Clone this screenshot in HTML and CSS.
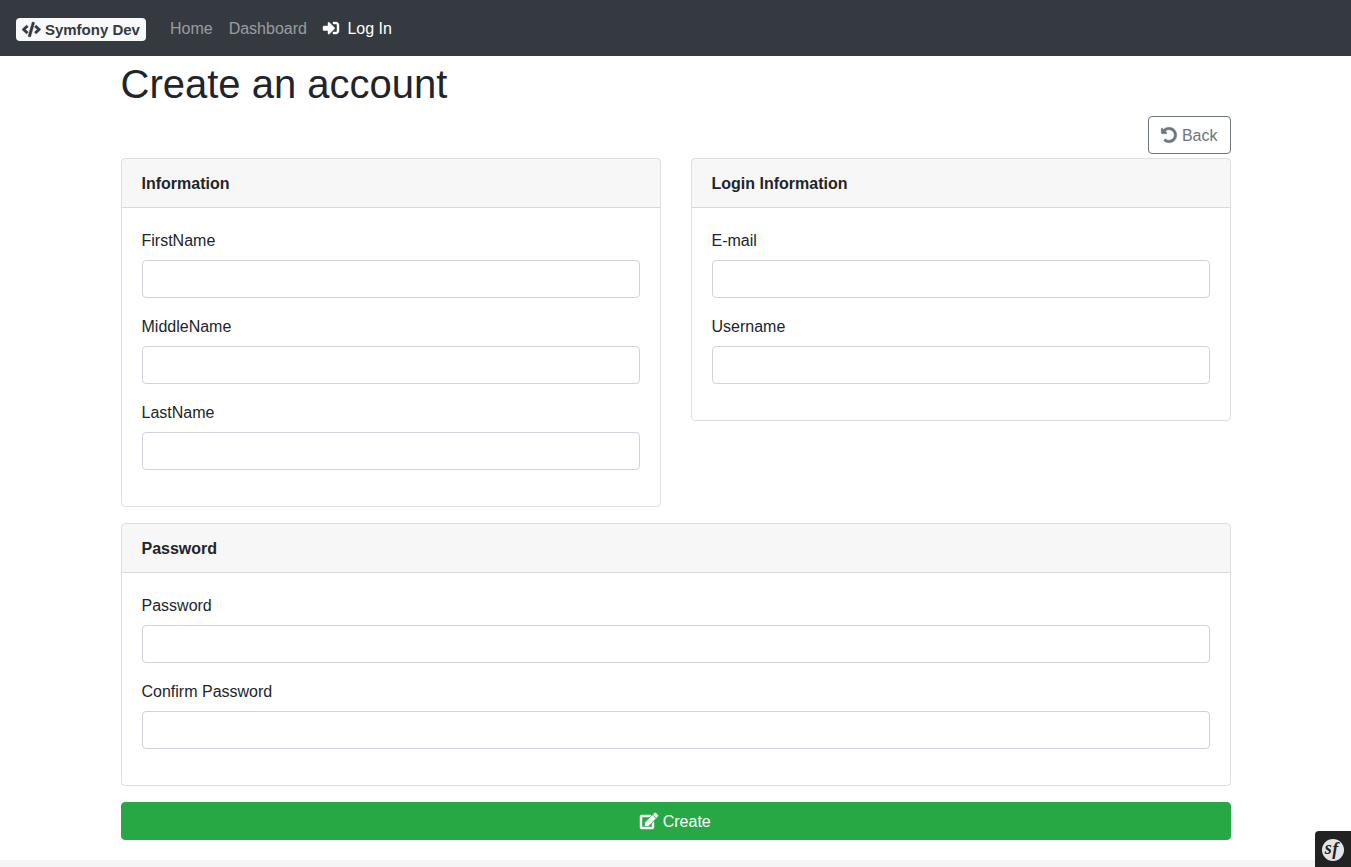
FILE: index.html
```html
<!DOCTYPE html>
<html lang="en">
<head>
<meta charset="utf-8">
<title>Create an account</title>
<link rel="stylesheet" href="styles.css">
</head>
<body>
<nav class="navbar">
  <a class="brand" href="#"><span class="badge"><svg class="icon icon-code" viewBox="0 0 640 512"><path d="M278.9 511.5l-61-17.7c-6.4-1.8-10-8.5-8.2-14.9L346.2 8.7c1.8-6.4 8.5-10 14.9-8.2l61 17.7c6.4 1.8 10 8.5 8.2 14.9L293.8 503.3c-1.9 6.4-8.5 10.1-14.9 8.2zm-114-112.2l43.5-46.4c4.6-4.9 4.3-12.7-.8-17.2L117 256l90.6-79.7c5.1-4.5 5.5-12.3.8-17.2l-43.5-46.4c-4.5-4.8-12.1-5.1-17-.5L3.8 247.2c-5.1 4.7-5.1 12.8 0 17.5l144.1 135.1c4.9 4.6 12.5 4.4 17-.5zm327.2.6l144.1-135.1c5.1-4.7 5.1-12.8 0-17.5L492.1 112.1c-4.8-4.5-12.4-4.3-17 .5L431.6 159c-4.6 4.9-4.3 12.7.8 17.2L523 256l-90.6 79.7c-5.1 4.5-5.5 12.3-.8 17.2l43.5 46.4c4.5 4.9 12.1 5.1 17 .6z"/></svg> Symfony Dev</span></a>
  <a class="nav-link" href="#">Home</a>
  <a class="nav-link" href="#">Dashboard</a>
  <a class="nav-link active" href="#"><svg class="icon" viewBox="0 0 512 512"><path d="M416 448h-84c-6.6 0-12-5.4-12-12v-40c0-6.6 5.4-12 12-12h84c17.7 0 32-14.3 32-32V160c0-17.7-14.3-32-32-32h-84c-6.6 0-12-5.4-12-12V76c0-6.6 5.4-12 12-12h84c53 0 96 43 96 96v192c0 53-43 96-96 96zm-47-201L201 79c-15-15-41-4.5-41 17v96H24c-13.3 0-24 10.7-24 24v96c0 13.3 10.7 24 24 24h136v96c0 21.5 26 32 41 17l168-168c9.3-9.4 9.3-24.6 0-34z"/></svg><span class="login-text">&nbsp; Log In</span></a>
</nav>
<main class="container">
  <h1 class="title">Create an account</h1>
  <div class="actions">
    <a class="btn btn-back" href="#"><svg class="icon" viewBox="0 0 512 512"><path d="M255.545 8c-66.269.119-126.438 26.233-170.86 68.685L48.971 40.971C33.851 25.851 8 36.559 8 57.941V192c0 13.255 10.745 24 24 24h134.059c21.382 0 32.09-25.851 16.971-40.971l-41.75-41.75c30.864-28.899 70.801-44.907 113.23-45.273 92.398-.798 170.283 73.977 169.484 169.442C423.236 348.009 349.816 424 256 424c-41.127 0-79.997-14.678-110.63-41.556-4.743-4.161-11.906-3.908-16.368.553L89.34 422.659c-4.872 4.872-4.631 12.815.482 17.433C133.798 479.813 192.074 504 256 504c136.966 0 247.999-111.033 248-247.998C504.001 119.193 392.354 7.755 255.545 8z"/></svg> Back</a>
  </div>
  <form>
    <div class="row">
      <section class="card">
        <div class="card-header">Information</div>
        <div class="card-body">
          <div class="field"><label for="first">FirstName</label><input id="first" type="text"></div>
          <div class="field"><label for="middle">MiddleName</label><input id="middle" type="text"></div>
          <div class="field"><label for="last">LastName</label><input id="last" type="text"></div>
        </div>
      </section>
      <section class="card">
        <div class="card-header">Login Information</div>
        <div class="card-body">
          <div class="field"><label for="email">E-mail</label><input id="email" type="email"></div>
          <div class="field"><label for="user">Username</label><input id="user" type="text"></div>
        </div>
      </section>
    </div>
    <section class="card">
      <div class="card-header">Password</div>
      <div class="card-body">
        <div class="field"><label for="pass">Password</label><input id="pass" type="password"></div>
        <div class="field"><label for="confirm">Confirm Password</label><input id="confirm" type="password"></div>
      </div>
    </section>
    <button class="btn btn-create" type="button"><svg class="icon icon-edit" viewBox="0 0 576 512"><path d="M402.6 83.2l90.2 90.2c3.8 3.8 3.8 10 0 13.8L274.4 405.6l-92.8 10.3c-12.4 1.4-22.9-9.1-21.5-21.5l10.3-92.8L388.8 83.2c3.8-3.8 10-3.8 13.8 0zm162-22.9l-48.8-48.8c-15.2-15.2-39.9-15.2-55.2 0l-35.4 35.4c-3.8 3.8-3.8 10 0 13.8l90.2 90.2c3.8 3.8 10 3.8 13.8 0l35.4-35.4c15.2-15.3 15.2-40 0-55.2zM384 346.2V448H64V128h229.8c3.2 0 6.2-1.3 8.5-3.5l40-40c7.6-7.6 2.2-20.5-8.5-20.5H48C21.5 64 0 85.5 0 112v352c0 26.5 21.5 48 48 48h352c26.5 0 48-21.5 48-48V306.2c0-10.7-12.9-16-20.5-8.5l-40 40c-2.2 2.3-3.5 5.3-3.5 8.5z"/></svg> Create</button>
  </form>
</main>
<footer class="footer"></footer>
<div class="toolbar-toggle">
  <svg class="sf-logo" viewBox="0 0 24 24"><circle cx="12" cy="12" r="11"/><text x="3.8" y="15.5">s</text><text class="sf-tall" x="11.2" y="17">f</text></svg>
</div>
</body>
</html>
```
FILE: styles.css
```css
*, *::before, *::after { box-sizing: border-box; }

body {
  margin: 0;
  height: 100vh;
  display: flex;
  flex-direction: column;
  overflow: hidden;
  background: #fff;
  color: #212529;
  font: 16px/1.5 "Liberation Sans", Arial, sans-serif;
}

a { text-decoration: none; }

.icon {
  width: 1em;
  height: 1em;
  vertical-align: -.125em;
  fill: currentColor;
  stroke: currentColor;
  stroke-width: 14px;
  overflow: visible;
}
.icon-code { width: 1.25em; }
.icon-edit { width: 1.125em; }

.navbar {
  flex: none;
  display: flex;
  align-items: center;
  height: 56px;
  padding: 8px 16px;
  background: #343a40;
}
.brand {
  margin-right: 16px;
  padding: 5px 0;
  font-size: 20px;
  line-height: 30px;
  white-space: nowrap;
}
.badge {
  display: inline-block;
  padding: .25em .4em;
  border-radius: 4px;
  background: #f8f9fa;
  color: #343a40;
  font-size: 75%;
  font-weight: 700;
  line-height: 1;
  vertical-align: baseline;
}
.nav-link { padding: 9px 8px 7px; color: rgba(255, 255, 255, .5); }
.nav-link.active { color: #fff; }
.login-text { margin-left: -.4px; }

.container {
  flex: none;
  width: 1140px;
  margin: 0 auto;
  padding: 4px 15px 20px;
}
.title {
  margin: 0 0 8px;
  font-size: 40px;
  font-weight: 500;
  line-height: 1.2;
}
.actions {
  display: flex;
  justify-content: flex-end;
  margin-bottom: 4px;
}

.btn {
  display: block;
  padding: 7px 12px 5px;
  border: 1px solid;
  border-radius: 4px;
  font: inherit;
  text-align: center;
}
.btn-back { border-color: #6c757d; color: #6c757d; }
.btn-create {
  width: 100%;
  border-color: #28a745;
  background: #28a745;
  color: #fff;
}

.row {
  display: grid;
  grid-template-columns: 1fr 1fr;
  align-items: start;
  column-gap: 30px;
}
.card {
  margin-bottom: 16px;
  border: 1px solid rgba(0, 0, 0, .125);
  border-radius: 4px;
}
.card-header {
  padding: 13px 20px 11px;
  border-bottom: 1px solid rgba(0, 0, 0, .125);
  border-radius: 3px 3px 0 0;
  background: rgba(0, 0, 0, .03);
  font-weight: 700;
}
.card-body { padding: 20px; }
.field { margin-bottom: 16px; }
.field label { display: block; padding: 1px 0 7px; }
.field input {
  display: block;
  width: 100%;
  height: 38px;
  padding: 6px 12px;
  border: 1px solid #ced4da;
  border-radius: 4px;
  background: #fff;
  font: inherit;
}

.footer { flex: 1 0 0; background: #f5f5f5; }

.toolbar-toggle {
  position: fixed;
  right: 0;
  bottom: 0;
  display: flex;
  align-items: center;
  justify-content: center;
  width: 36px;
  height: 36px;
  padding-top: 2px;
  border-top-left-radius: 4px;
  background: #222;
}
.sf-logo { width: 24px; height: 24px; }
.sf-logo circle { fill: #e5e5e5; }
.sf-logo text {
  fill: #222;
  font: italic 700 18px "Liberation Serif", serif;
}
.sf-logo .sf-tall { font-size: 18px; }
```
